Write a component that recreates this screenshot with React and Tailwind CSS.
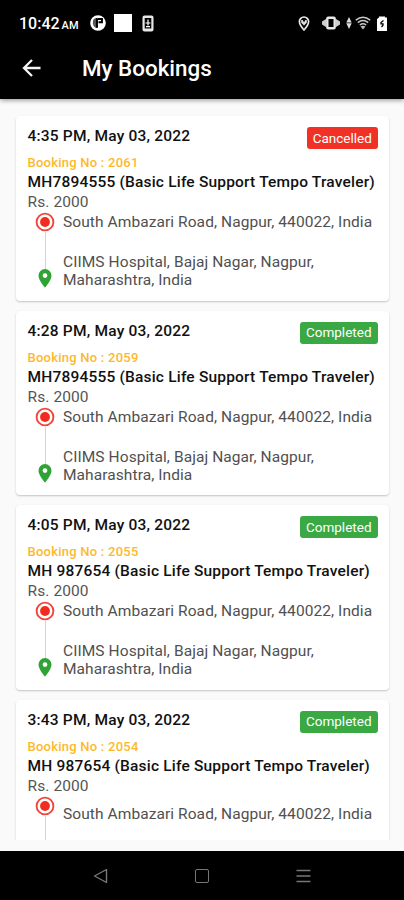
import React from "react";

const bookings = [
  { time: "4:35 PM, May 03, 2022", no: "2061", vehicle: "MH7894555 (Basic Life Support Tempo Traveler)", status: "Cancelled" },
  { time: "4:28 PM, May 03, 2022", no: "2059", vehicle: "MH7894555 (Basic Life Support Tempo Traveler)", status: "Completed" },
  { time: "4:05 PM, May 03, 2022", no: "2055", vehicle: "MH 987654 (Basic Life Support Tempo Traveler)", status: "Completed" },
  { time: "3:43 PM, May 03, 2022", no: "2054", vehicle: "MH 987654 (Basic Life Support Tempo Traveler)", status: "Completed", partial: true },
];

function StatusBar() {
  return (
    <div className="flex h-[46px] items-center pl-[19px] pr-[17px] text-white">
      <span className="w-[71px] whitespace-nowrap pt-[3px] text-[16px] font-medium leading-5">
        10:42<span className="ml-[2px] text-[11px]">AM</span>
      </span>
      <svg className="h-4 w-4" viewBox="0 0 16 16">
        <circle cx="8" cy="8" r="7.800" fill="#fff" />
        <path d="M3.200 4.800Q5 2.800 7.300 2.800V12.800H5.500Q3 11.500 2.800 8z" fill="#555" />
        <path d="M7 3.200v9.600M8 4h4v3.300H8.500" fill="none" stroke="#000" strokeWidth="1.900" />
      </svg>
      <span className="ml-[8px] h-[18px] w-[18px] bg-white" />
      <svg className="ml-[10px] h-[17px] w-3" viewBox="0 0 12 17">
        <rect x=".5" y=".5" width="11" height="16" rx="2" fill="#e8e8e8" />
        <rect x="2.700" y="3" width="6.600" height="10.500" fill="#000" />
        <path d="M6 4.500v6M3.500 8h5M4 11.700h4" stroke="#fff" strokeWidth="1.200" />
      </svg>
      <svg className="ml-auto h-[15px] w-3" viewBox="0 0 12 15">
        <path d="M6 1a4.600 4.600 0 0 0-4.600 4.600C1.400 9 6 14 6 14s4.600-5 4.600-8.400A4.600 4.600 0 0 0 6 1z" fill="none" stroke="#e8e8e8" strokeWidth="1.700" />
        <path d="M3.200 4h1.800v1.500h2V4h1.800v2.700L6 9.500 3.200 6.700z" fill="#ddd" />
      </svg>
      <svg className="ml-[12px] h-[14px] w-[18px]" viewBox="0 0 18 14">
        <path d="M4 3L0 5.500v3L4 11zM14 3l4 2.500v3L14 11z" fill="#cfcfcf" />
        <rect x="5.300" y="1.700" width="7.400" height="10.600" rx="1" fill="#000" stroke="#e8e8e8" strokeWidth="2.400" />
      </svg>
      <svg className="ml-[6px] h-[12px] w-[6px]" viewBox="0 0 6 12">
        <path d="M3 0l2.700 5.500H.3zM3 12L.3 6.300h5.400z" fill="#ddd" />
      </svg>
      <svg className="ml-[3px] h-[14px] w-4" viewBox="0 0 16 14">
        <path d="M.8 4.200Q8-1.500 15.200 4.200M2.800 6.700Q8 2.500 13.200 6.700M4.800 9Q8 6.400 11.200 9" fill="none" stroke="#c8c8c8" strokeWidth="1.500" />
        <path d="M5.500 10.500Q8 8.800 10.500 10.500L8 13.500z" fill="#bbb" />
      </svg>
      <svg className="ml-[6px] h-[15px] w-[10px]" viewBox="0 0 10 15">
        <path d="M2 1.500V.5h6v1H10V15H0V3z" fill="#fff" />
        <path d="M6.500 4.500L4 6.500v1.300h2v1.500L4.500 11" fill="none" stroke="#000" strokeWidth="1.300" />
      </svg>
    </div>
  );
}

function TargetIcon() {
  return (
    <svg className="h-5 w-5 shrink-0" viewBox="0 0 20 20">
      <circle cx="10" cy="10" r="8.400" fill="none" stroke="#f3453a" strokeWidth="1.900" />
      <circle cx="10" cy="10" r="4.900" fill="#f22b20" />
    </svg>
  );
}

function PinIcon() {
  return (
    <svg className="h-[19px] w-[14px] shrink-0" viewBox="0 0 14 19">
      <path fillRule="evenodd" d="M7 0A6.500 6.500 0 0 0 .5 6.500C.5 11.300 7 18.700 7 18.700s6.500-7.400 6.500-12.200A6.500 6.500 0 0 0 7 0zm0 4.200a2.400 2.400 0 1 1 0 4.800 2.400 2.400 0 0 1 0-4.800z" fill="#2fa336" />
    </svg>
  );
}

function BookingCard({ booking }) {
  const cancelled = booking.status === "Cancelled";
  return (
    <article className="h-[184.500px] shrink-0 rounded-[4px] bg-white pl-[11.500px] pr-[11.500px] pt-[10px] shadow-[0_1px_2px_rgba(0,0,0,0.22)]">
      <div className="flex h-[26px] items-start justify-between">
        <h2 className="whitespace-nowrap text-[15.500px] font-medium leading-5 tracking-[0.200px] text-[#111]">{booking.time}</h2>
        <span
          className={`mt-[1px] flex h-[22px] items-center justify-center rounded-[3px] text-[13.500px] text-white ${
            cancelled ? "w-[70.500px] bg-[#f03226]" : "w-[77.500px] bg-[#3aa843]"
          }`}
        >
          {booking.status}
        </span>
      </div>
      <p className="h-5 whitespace-nowrap pt-px text-[13px] font-medium leading-5 tracking-[0.240px] text-[#fdb92b]">Booking No : {booking.no}</p>
      <p className="whitespace-nowrap text-[15.500px] font-medium leading-5 tracking-[0.190px] text-[#111]">{booking.vehicle}</p>
      <p className="h-5 text-[15.500px] leading-5 tracking-[0.100px] text-[#555]">Rs. 2000</p>
      <div className="flex">
        <div className="ml-[7.500px] flex w-5 flex-col items-center">
          <TargetIcon />
          <span className="h-[37px] w-px bg-[#d4d4d4]" />
          {!booking.partial && <PinIcon />}
        </div>
        <div className="ml-[8px] whitespace-nowrap text-[15.500px] leading-[18px] tracking-[0.080px] text-[#505050]">
          <p className={booking.partial ? "pt-[9px]" : "pt-px"}>South Ambazari Road, Nagpur, 440022, India</p>
          {!booking.partial && (
            <p className="mt-[22px]">
              CIIMS Hospital, Bajaj Nagar, Nagpur,
              <br />
              Maharashtra, India
            </p>
          )}
        </div>
      </div>
    </article>
  );
}

export default function App() {
  return (
    <div className="flex h-[900px] w-[404px] flex-col overflow-hidden bg-[#fafafa] font-['Roboto',sans-serif]">
      <header className="z-10 h-[99px] shrink-0 bg-black shadow-[0_1px_5px_rgba(0,0,0,0.450)]">
        <StatusBar />
        <div className="flex h-[44px] items-center pl-[22px] text-white">
          <svg className="h-5 w-5" viewBox="0 0 20 20">
            <path d="M18.500 10H2.500M10 2L2 10l8 8" fill="none" stroke="#f4f4f4" strokeWidth="2.300" />
          </svg>
          <h1 className="ml-[40px] text-[22.400px] font-medium leading-7">My Bookings</h1>
        </div>
      </header>
      <main className="flex h-[741px] shrink-0 flex-col gap-[10px] overflow-hidden pl-[16px] pr-[15px] pt-[17px]">
        {bookings.map((booking) => (
          <BookingCard key={booking.no} booking={booking} />
        ))}
      </main>
      <nav className="mt-[11px] flex h-[49px] shrink-0 items-center justify-between bg-black pl-[93px] pr-[93px]">
        <svg className="h-[16px] w-[15px]" viewBox="0 0 15 16">
          <path d="M13.500 1.500v13L1.500 8z" fill="none" stroke="#777" strokeWidth="1.400" strokeLinejoin="round" />
        </svg>
        <span className="h-[14px] w-[14px] rounded-[2px] border-[1.500px] border-[#777]" />
        <svg className="h-[14px] w-[15px]" viewBox="0 0 15 14">
          <path d="M.5 1.500h14M.5 7h14M.5 12.500h14" stroke="#777" strokeWidth="1.400" />
        </svg>
      </nav>
    </div>
  );
}
